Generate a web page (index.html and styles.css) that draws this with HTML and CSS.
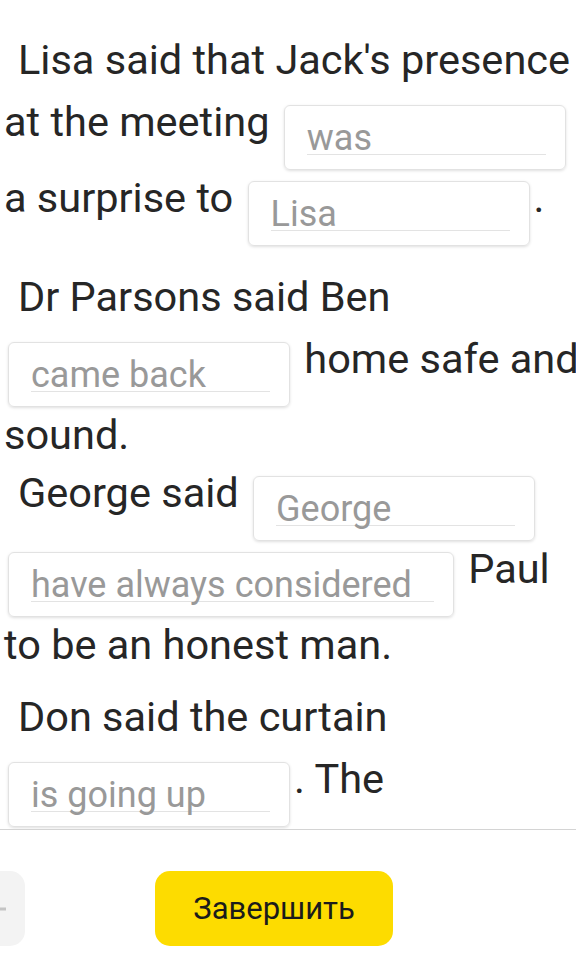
FILE: index.html
```html
<!DOCTYPE html>
<html>
<head>
	<meta charset="utf-8">
	<title>Reported speech</title>
	<link rel="stylesheet" href="styles.css">
</head>
<body>
	<div class="tasks">
		<p class="task task_first">Lisa said that Jack's presence at the meeting <span class="blank"><span class="field">was</span></span> a surprise to <span class="blank"><span class="field">Lisa</span></span>.</p>
		<p class="task task_tight">Dr Parsons said Ben <span class="blank"><span class="field">came back</span></span> home safe and sound.</p>
		<p class="task">George said <span class="blank"><span class="field">George</span></span> <span class="blank"><span class="field">have always considered</span></span> Paul to be an honest man.</p>
		<p class="task">Don said the curtain <span class="blank"><span class="field">is going up</span></span>. The <span class="blank"><span class="field">play was</span></span> about to start.</p>
	</div>
	<div class="footer">
		<button class="btn btn_back">
			<svg width="28" height="20" viewBox="0 0 28 20"><path d="M26 10H3M11 2L3 10l8 8" stroke="#c4c4c4" stroke-width="3" fill="none"/></svg>
		</button>
		<button class="btn btn_finish">Завершить</button>
	</div>
</body>
</html>
```

FILE: styles.css
```css
body,html{
	margin: 0;
	padding: 0;
}
body{
	font-family: Roboto, "Noto Sans", sans-serif;
	color: #262626;
	background-color: white;
	overflow: hidden;
}
.tasks{
	height: 829px;
	box-sizing: border-box;
	padding-top: 29px;
	overflow: hidden;
}
.task{
	width: 580px;
	margin: 0 0 10px;
	padding-left: 4px;
	font-size: 41.5px;
	line-height: 62px;
	text-indent: 14px;
}
.task_first{
	margin-bottom: 23px;
}
.task_tight{
	margin-bottom: -4px;
}
.blank{
	display: inline-block;
	vertical-align: -14px;
	margin: 0 4px -3px;
	padding: 16px 19px 14px 22px;
	border: 1px solid #e2e2e2;
	border-radius: 6px;
	box-shadow: 0 1px 3px rgba(0,0,0,0.13);
	text-indent: 0;
	font-size: 36px;
	line-height: 32px;
	color: #999;
}
.field{
	display: inline-block;
	min-width: 239px;
	box-sizing: border-box;
	padding-right: 22px;
	border-bottom: 1px solid #e3e3e3;
}
.footer{
	display: flex;
	align-items: flex-start;
	height: 129px;
	box-sizing: border-box;
	padding-top: 41px;
	border-top: 1px solid #d4d4d4;
}
.btn{
	height: 75px;
	border: none;
	border-radius: 15px;
	outline: none;
	font-family: Roboto, "Noto Sans", sans-serif;
}
.btn_back{
	width: 62px;
	margin-left: -37px;
	padding: 0;
	background-color: #f3f3f3;
	display: flex;
	align-items: center;
	justify-content: center;
}
.btn_finish{
	width: 238px;
	margin-left: 130px;
	background-color: #fddc00;
	color: #1b1b1b;
	font-size: 31px;
}
```
